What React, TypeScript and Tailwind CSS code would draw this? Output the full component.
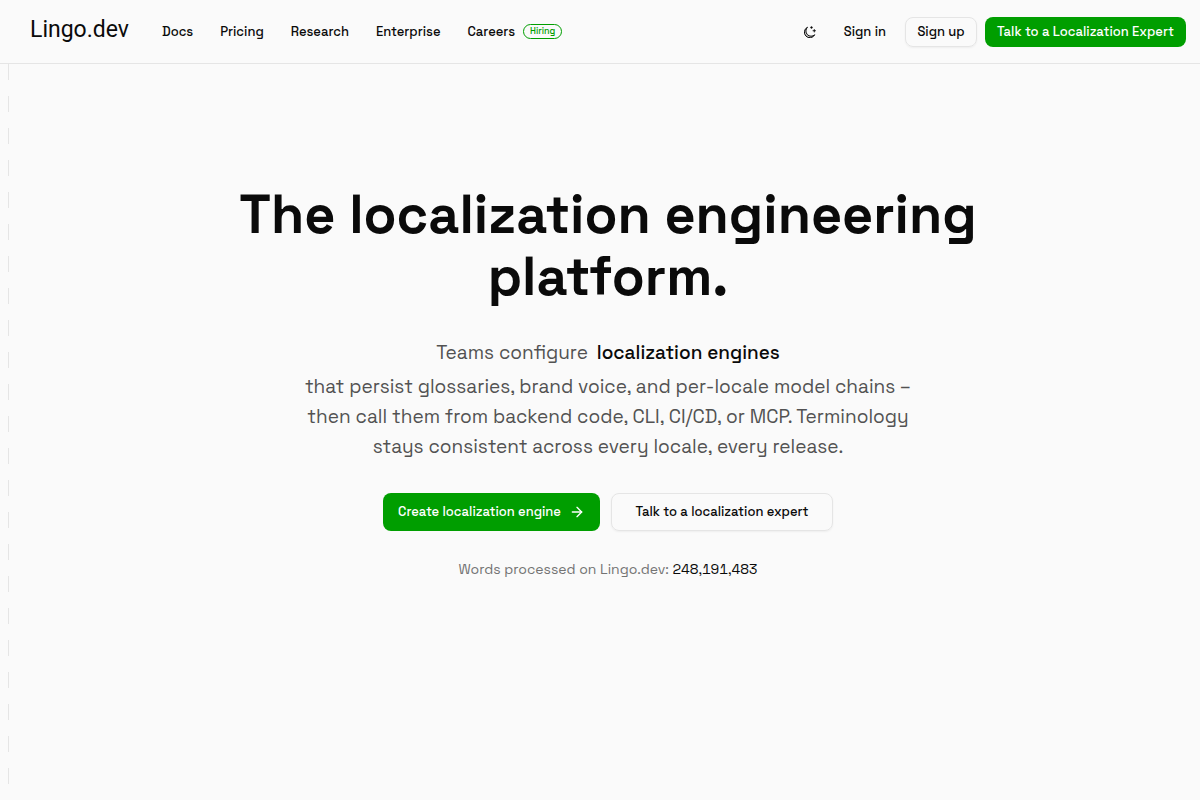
import React from "react";
import { ArrowRight } from "lucide-react";

const NAV_LINKS = ["Docs", "Pricing", "Research", "Enterprise"];

function MoonIcon() {
  return (
    <svg
      viewBox="0 0 24 24"
      className="size-3"
      fill="none"
      stroke="currentColor"
      strokeWidth="2"
      strokeLinejoin="round"
      aria-hidden="true"
    >
      <path
        d="M21.5 17.5A11 11 0 1 1 7 2.5a10.4 10.4 0 0 0 14.5 15Z"
        fill="currentColor"
        fillOpacity="0.2"
      />
      <path d="M15 0l.9 2.1L18 3l-2.1.9L15 6l-.9-2.1L12 3l2.1-.9Z" fill="currentColor" strokeWidth="0.5" />
      <path d="M20.5 6l1 2.5 2.5 1-2.5 1-1 2.5-1-2.5-2.5-1 2.5-1Z" fill="currentColor" strokeWidth="0.5" />
    </svg>
  );
}

function Header() {
  return (
    <header className="flex h-16 shrink-0 items-center border-b border-neutral-200 pr-3.5 pl-[30px] text-[13px] font-medium">
      <a href="#" className="mr-8 w-[100px] pb-1 font-[Roboto,sans-serif] text-[23px] leading-8 font-normal">
        Lingo.dev
      </a>
      <nav className="flex items-center gap-[27px]">
        {NAV_LINKS.map((label) => (
          <a key={label} href="#">
            {label}
          </a>
        ))}
        <a href="#" className="flex items-center gap-2">
          Careers
          <span className="flex h-[15px] items-center rounded-full border border-[#009e00] px-1.5 text-[9px] text-[#009e00]">
            Hiring
          </span>
        </a>
      </nav>

      <div className="ml-auto flex items-center gap-2">
        <button type="button" aria-label="Toggle theme" className="mr-5 flex items-center">
          <MoonIcon />
        </button>
        <a href="#" className="mr-[11px]">
          Sign in
        </a>
        <button
          type="button"
          className="flex h-[30px] w-[72px] items-center justify-center rounded-lg border border-neutral-200 shadow-xs"
        >
          Sign up
        </button>
        <button
          type="button"
          className="flex h-[30px] w-[201px] items-center justify-center rounded-lg bg-[#009e00] whitespace-nowrap text-white"
        >
          Talk to a Localization Expert
        </button>
      </div>
    </header>
  );
}

function Hero() {
  return (
    <section className="flex grow flex-col items-center pt-[120px] pl-[7px] text-center">
      <h1 className="text-[54px] leading-[62px] font-semibold">
        The localization engineering
        <br />
        platform.
      </h1>

      <div className="mt-[30px] text-[19px] leading-[30px] text-neutral-600">
        <p className="mb-1">
          Teams configure <span className="ml-1 font-medium text-neutral-950">localization engines</span>
        </p>
        <p>
          that persist glossaries, brand voice, and per-locale model chains –
          <br />
          then call them from backend code, CLI, CI/CD, or MCP. Terminology
          <br />
          stays consistent across every locale, every release.
        </p>
      </div>

      <div className="mt-[31px] flex gap-[11px] text-[13px] font-medium">
        <button
          type="button"
          className="flex h-[38px] w-[217px] items-center justify-center gap-2 rounded-lg bg-[#009e00] text-white"
        >
          Create localization engine
          <ArrowRight className="size-4" />
        </button>
        <button
          type="button"
          className="flex h-[38px] w-[222px] items-center justify-center rounded-lg border border-neutral-200 shadow-xs"
        >
          Talk to a localization expert
        </button>
      </div>

      <p className="mt-7 text-sm text-neutral-500">
        Words processed on Lingo.dev: <span className="text-neutral-950 tabular-nums">248,191,483</span>
      </p>
    </section>
  );
}

export default function App() {
  return (
    <div className="flex min-h-screen flex-col bg-[#fafafa] font-['Space_Grotesk',Inter,sans-serif] text-neutral-950">
      <Header />
      <main className="flex grow pl-2">
        {/* dashed guide rail */}
        <div className="w-px shrink-0 bg-[repeating-linear-gradient(to_bottom,#e5e5e5_0_16px,transparent_16px_32px)]" />
        <Hero />
      </main>
    </div>
  );
}
